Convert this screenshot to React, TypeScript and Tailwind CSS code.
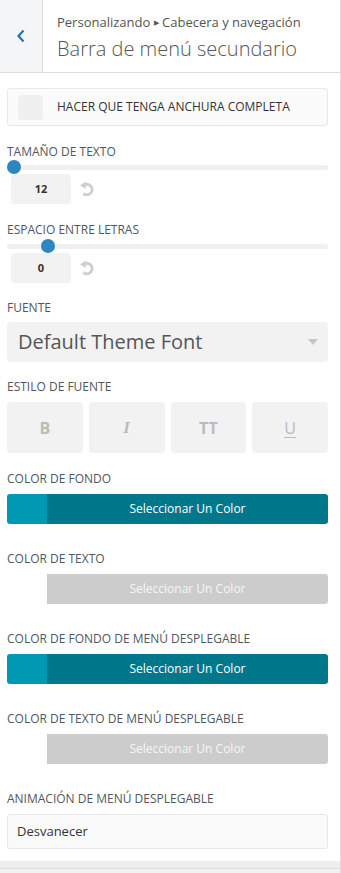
const Label = ({ children }: { children: React.ReactNode }) => (
  <div className="text-[12px] leading-[16px] text-[#50575e]">{children}</div>
)

const ResetIcon = () => (
  <svg width="16" height="16" viewBox="0 0 16 16">
    <path d="M5 4.2 A5.2 5.2 0 1 1 4.5 12.5" fill="none" stroke="#cfcfcf" strokeWidth="3" />
    <path d="M1 4.5 L6.5 0.5 L6.8 8 Z" fill="#cfcfcf" />
  </svg>
)

const Slider = ({ pos, value }: { pos: number; value: string }) => (
  <div>
    <div className="relative h-[14px]">
      <div className="absolute left-0 right-0 top-[5px] h-[5px] rounded-full bg-[#f0f0f0]" />
      <div
        className="absolute top-0 h-[14px] w-[14px] rounded-full bg-[#2e86c1]"
        style={{ left: pos }}
      />
    </div>
    <div className="flex items-center gap-[8px] pl-[4px]">
      <div className="flex h-[30px] w-[60px] items-center justify-center rounded-[4px] bg-[#f2f2f2] text-[11px] font-bold text-[#333]">
        {value}
      </div>
      <ResetIcon />
    </div>
  </div>
)

const ColorButton = ({ filled }: { filled: boolean }) => (
  <div className="flex h-[30px] overflow-hidden rounded-[3px]">
    <div className={filled ? "w-[40px] bg-[#0098b2]" : "w-[40px] bg-white"} />
    <div
      className={
        filled
          ? "flex flex-1 items-center justify-center bg-[#00788c] text-[12px] text-white"
          : "flex flex-1 items-center justify-center bg-[#cccccc] text-[12px] text-[#f6f6f6]"
      }
    >
      Seleccionar Un Color
    </div>
  </div>
)

export default function App() {
  return (
    <div
      className="w-[341px] bg-white"
      style={{ fontFamily: '"Open Sans", "Noto Sans", sans-serif' }}
    >
      <div className="w-[341px] border-r border-[#dddddd]">
        {/* header */}
        <div className="flex h-[73px] border-b border-[#dddddd]">
          <div className="flex w-[43px] items-center justify-center border-r border-[#dddddd] bg-[#f4f5f6]">
            <svg width="10" height="14" viewBox="0 0 10 14">
              <path d="M7.5 1.5 L2.5 7 L7.5 12.5" fill="none" stroke="#2271b1" strokeWidth="2.2" />
            </svg>
          </div>
          <div className="flex flex-col pl-[14px] pt-[12px]">
            <div className="text-[13px] leading-[20px] text-[#555]">
              Personalizando <span className="text-[7px] align-[2px]">▶</span> Cabecera y navegación
            </div>
            <div className="mt-[3px] text-[20px] font-light leading-[26px] text-[#555]">
              Barra de menú secundario
            </div>
          </div>
        </div>

        {/* controls */}
        <div className="pl-[7px] pr-[12px]">
          <div className="mt-[15px] flex h-[38px] items-center rounded-[3px] border border-[#e8e8e8] bg-[#fbfbfb] pl-[10px]">
            <div className="h-[25px] w-[25px] rounded-[3px] bg-[#f0f0f0]" />
            <div className="ml-[14px] text-[12px] text-[#333]">HACER QUE TENGA ANCHURA COMPLETA</div>
          </div>

          <div className="mt-[18px]">
            <Label>TAMAÑO DE TEXTO</Label>
            <Slider pos={0} value="12" />
          </div>

          <div className="mt-[18px]">
            <Label>ESPACIO ENTRE LETRAS</Label>
            <div className="h-px" />
            <Slider pos={34} value="0" />
          </div>

          <div className="mt-[17px]">
            <Label>FUENTE</Label>
            <div className="mt-[6px] flex h-[40px] items-center justify-between rounded-[4px] bg-[#f2f2f2] pl-[11px] pr-[10px]">
              <span className="text-[20px] text-[#555]">Default Theme Font</span>
              <svg width="10" height="6" viewBox="0 0 10 6">
                <path d="M0 0 L10 0 L5 6 Z" fill="#c4c4c4" />
              </svg>
            </div>
          </div>

          <div className="mt-[17px]">
            <Label>ESTILO DE FUENTE</Label>
            <div className="mt-[7px] grid grid-cols-4 gap-[6px]">
              <div className="flex h-[51px] items-center justify-center rounded-[4px] bg-[#f2f2f2] text-[16px] font-bold text-[#bbb]">
                B
              </div>
              <div
                className="flex h-[51px] items-center justify-center rounded-[4px] bg-[#f2f2f2] text-[17px] font-bold italic text-[#bbb]"
                style={{ fontFamily: '"Liberation Serif", serif' }}
              >
                I
              </div>
              <div className="flex h-[51px] items-center justify-center rounded-[4px] bg-[#f2f2f2] text-[16px] font-bold text-[#bbb]">
                TT
              </div>
              <div className="flex h-[51px] items-center justify-center rounded-[4px] bg-[#f2f2f2] text-[16px] text-[#bbb] underline underline-offset-[3px]">
                U
              </div>
            </div>
          </div>

          <div className="mt-[18px]">
            <Label>COLOR DE FONDO</Label>
            <div className="mt-[7px]">
              <ColorButton filled />
            </div>
          </div>

          <div className="mt-[27px]">
            <Label>COLOR DE TEXTO</Label>
            <div className="mt-[7px]">
              <ColorButton filled={false} />
            </div>
          </div>

          <div className="mt-[27px]">
            <Label>COLOR DE FONDO DE MENÚ DESPLEGABLE</Label>
            <div className="mt-[7px]">
              <ColorButton filled />
            </div>
          </div>

          <div className="mt-[27px]">
            <Label>COLOR DE TEXTO DE MENÚ DESPLEGABLE</Label>
            <div className="mt-[7px]">
              <ColorButton filled={false} />
            </div>
          </div>

          <div className="mt-[27px]">
            <Label>ANIMACIÓN DE MENÚ DESPLEGABLE</Label>
            <div className="mt-[7px] flex h-[35px] items-center rounded-[3px] border border-[#e8e8e8] bg-[#fafafa] pl-[9px] text-[13px] text-[#333]">
              Desvanecer
            </div>
          </div>
        </div>

        <div className="mt-[12px] h-[7px] bg-[#eeeeee]" />
        <div className="h-[5px] border-t border-[#dddddd] bg-[#f1f1f1]" />
      </div>
    </div>
  )
}
